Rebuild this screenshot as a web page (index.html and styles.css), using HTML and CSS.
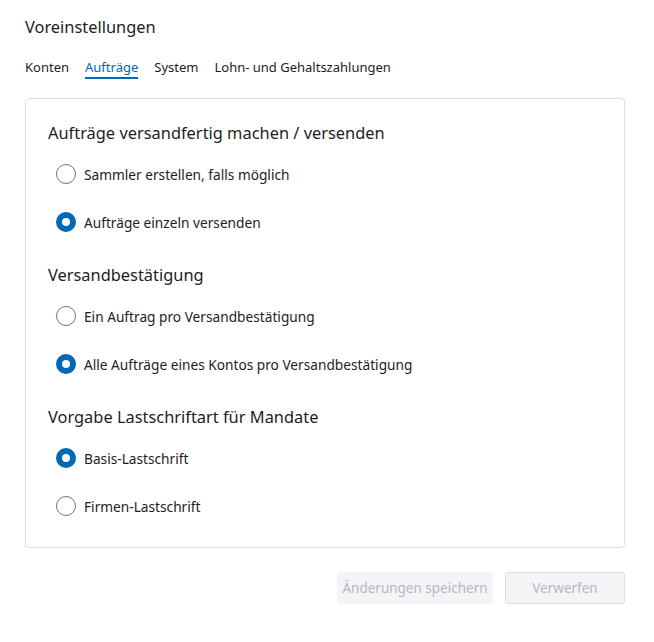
FILE: index.html
```html
<!DOCTYPE html>
<html lang="de">
<head>
    <meta charset="UTF-8">
    <meta name="viewport" content="width=device-width, initial-scale=1.0">
    <title>Voreinstellungen</title>
    <link rel="stylesheet" href="styles.css">
</head>
<body>
    <div class="page">
        <h1>Voreinstellungen</h1>

        <nav class="tabs">
            <a href="#" class="tab">Konten</a>
            <a href="#" class="tab active">Aufträge</a>
            <a href="#" class="tab">System</a>
            <a href="#" class="tab">Lohn- und Gehaltszahlungen</a>
        </nav>

        <div class="card">
            <div class="group">
                <h2>Aufträge versandfertig machen / versenden</h2>
                <label class="radio">
                    <input type="radio" name="versand">
                    <span>Sammler erstellen, falls möglich</span>
                </label>
                <label class="radio">
                    <input type="radio" name="versand" checked>
                    <span>Aufträge einzeln versenden</span>
                </label>
            </div>

            <div class="group">
                <h2>Versandbestätigung</h2>
                <label class="radio">
                    <input type="radio" name="bestaetigung">
                    <span>Ein Auftrag pro Versandbestätigung</span>
                </label>
                <label class="radio">
                    <input type="radio" name="bestaetigung" checked>
                    <span>Alle Aufträge eines Kontos pro Versandbestätigung</span>
                </label>
            </div>

            <div class="group">
                <h2>Vorgabe Lastschriftart für Mandate</h2>
                <label class="radio">
                    <input type="radio" name="lastschrift" checked>
                    <span>Basis-Lastschrift</span>
                </label>
                <label class="radio">
                    <input type="radio" name="lastschrift">
                    <span>Firmen-Lastschrift</span>
                </label>
            </div>
        </div>

        <div class="actions">
            <button class="btn btn-primary" disabled>Änderungen speichern</button>
            <button class="btn btn-secondary" disabled>Verwerfen</button>
        </div>
    </div>
</body>
</html>
```

FILE: styles.css
```css
body {
    margin: 0;
    font-family: 'Noto Sans', 'Open Sans', sans-serif;
    color: #1d1d25;
    background-color: #fff;
}
.page {
    width: 600px;
    padding: 15px 25px;
}
h1 {
    font-size: 16.4px;
    font-weight: 400;
    margin: 0;
    line-height: 24px;
}
.tabs {
    display: flex;
    gap: 16px;
    margin-top: 19px;
}
.tab {
    font-size: 13px;
    color: #1d1d25;
    text-decoration: none;
    line-height: 19px;
    border-bottom: 2px solid transparent;
}
.tab.active {
    color: #0068b4;
    border-bottom-color: #0068b4;
}
.card {
    margin-top: 19px;
    border: 1px solid #dddde3;
    border-radius: 4px;
    padding: 20px 22px 17px;
}
.group {
    display: flex;
    flex-direction: column;
}
.group + .group {
    margin-top: 15px;
}
h2 {
    font-size: 16.4px;
    font-weight: 400;
    margin: 0 0 3px;
    line-height: 28px;
}
.radio {
    display: flex;
    align-items: center;
    gap: 8px;
    font-size: 13.7px;
    height: 48px;
    padding-left: 8px;
}
.radio input {
    appearance: none;
    margin: 0;
    width: 20px;
    height: 20px;
    border: 1.5px solid #6d7083;
    border-radius: 50%;
    box-sizing: border-box;
}
.radio input:checked {
    border: 6px solid #0068b4;
}
.actions {
    display: flex;
    justify-content: flex-end;
    gap: 12px;
    margin-top: 24px;
}
.btn {
    font-family: inherit;
    font-size: 13.5px;
    height: 32px;
    padding: 0;
    white-space: nowrap;
    border-radius: 3px;
    color: #b5b7c5;
    background-color: #f4f4f7;
    border: 1px solid #f4f4f7;
}
.btn-primary {
    width: 156px;
}
.btn-secondary {
    width: 120px;
    border-color: #dcdce4;
}
```
